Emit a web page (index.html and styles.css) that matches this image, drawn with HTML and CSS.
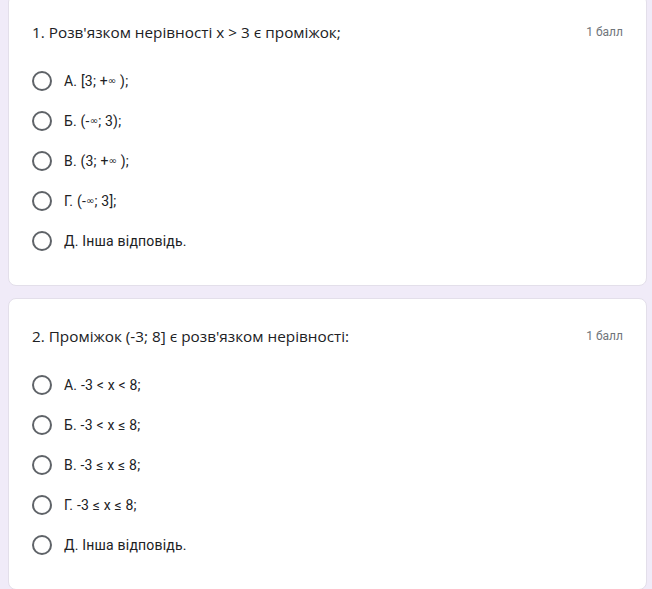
FILE: index.html
```html
<!DOCTYPE html>
<html lang="uk">
<head>
<meta charset="utf-8">
<title>Тест</title>
<link rel="stylesheet" href="styles.css">
</head>
<body>
<main class="page">
  <section class="card card-first">
    <div class="q-head">
      <div class="q-title">1. Розв'язком нерівності x &gt; 3 є проміжок;</div>
      <div class="q-points">1 балл</div>
    </div>
    <ul class="options">
      <li class="option"><span class="radio"></span><span class="opt-text">А. [3; +<span class="inf">∞</span> );</span></li>
      <li class="option"><span class="radio"></span><span class="opt-text">Б. (-<span class="inf">∞</span>; 3);</span></li>
      <li class="option"><span class="radio"></span><span class="opt-text">В. (3; +<span class="inf">∞</span> );</span></li>
      <li class="option"><span class="radio"></span><span class="opt-text">Г. (-<span class="inf">∞</span>; 3];</span></li>
      <li class="option"><span class="radio"></span><span class="opt-text">Д. Інша відповідь.</span></li>
    </ul>
  </section>
  <section class="card">
    <div class="q-head">
      <div class="q-title">2. Проміжок (-3; 8] є розв'язком нерівності:</div>
      <div class="q-points">1 балл</div>
    </div>
    <ul class="options">
      <li class="option"><span class="radio"></span><span class="opt-text">А. -3 &lt; x &lt; 8;</span></li>
      <li class="option"><span class="radio"></span><span class="opt-text">Б. -3 &lt; x ≤ 8;</span></li>
      <li class="option"><span class="radio"></span><span class="opt-text">В. -3 ≤ x ≤ 8;</span></li>
      <li class="option"><span class="radio"></span><span class="opt-text">Г. -3 ≤ x ≤ 8;</span></li>
      <li class="option"><span class="radio"></span><span class="opt-text">Д. Інша відповідь.</span></li>
    </ul>
  </section>
</main>
</body>
</html>
```
FILE: styles.css
```css
html, body {
  margin: 0;
  padding: 0;
  background: #f0ebf8;
}
body {
  overflow: hidden;
}
.page {
  display: flex;
  flex-direction: column;
  gap: 12px;
  padding: 0 5px 0 8px;
}
.card {
  background: #fff;
  border: 1px solid #e3dfea;
  border-radius: 8px;
  padding: 23px 23px 24px 23px;
}
.card-first {
  margin-top: -6px;
}
.q-head {
  display: flex;
  justify-content: space-between;
  align-items: center;
  height: 28px;
  margin-bottom: 15px;
}
.q-title {
  font-family: "Open Sans", Roboto, sans-serif;
  font-size: 15.3px;
  color: #202124;
}
.q-points {
  font-family: Roboto, "Liberation Sans", sans-serif;
  font-size: 12px;
  color: #70757a;
}
.options {
  list-style: none;
  margin: 0;
  padding: 0;
}
.option {
  display: flex;
  align-items: center;
  height: 40px;
  gap: 12px;
}
.radio {
  width: 20px;
  height: 20px;
  box-sizing: border-box;
  border: 2px solid #5f6368;
  border-radius: 50%;
  flex: none;
}
.opt-text {
  font-family: Roboto, "Liberation Sans", sans-serif;
  font-size: 14px;
  letter-spacing: 0.2px;
  color: #202124;
}
.inf {
  font-family: "DejaVu Sans", sans-serif;
  font-size: 10px;
  vertical-align: 2px;
}
```
